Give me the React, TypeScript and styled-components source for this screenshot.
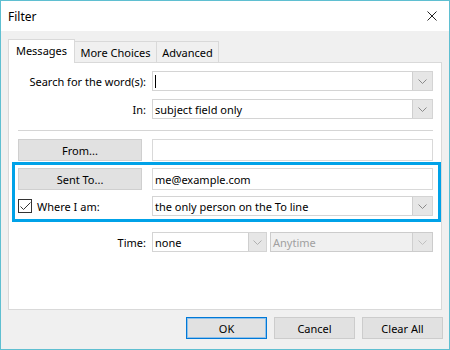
import React from "react";
import styled, { createGlobalStyle } from "styled-components";

const GlobalStyle = createGlobalStyle`
  html, body { margin: 0; padding: 0; background: #ffffff; }
  body {
    font-family: "Noto Sans", "Segoe UI", sans-serif;
    font-size: 11px;
    color: #000000;
  }
  * { box-sizing: border-box; }
`;

const Window = styled.div`
  width: 450px;
  height: 350px;
  border: 1px solid #5fbfd1;
  display: flex;
  flex-direction: column;
  background: #f0f0f0;
`;

const TitleBar = styled.div`
  height: 30px;
  flex: none;
  background: #ffffff;
  display: flex;
  align-items: center;
  justify-content: space-between;
  padding: 0 12px 0 7px;
`;

const Title = styled.span`
  font-size: 12px;
`;

const CloseButton = styled.div`
  width: 10px;
  height: 10px;
  display: flex;
`;

const Body = styled.div`
  flex: none;
  padding: 8px 7px 0 7px;
  display: flex;
  flex-direction: column;
`;

const TabStrip = styled.div`
  position: relative;
  z-index: 1;
  height: 23px;
  display: flex;
  align-items: flex-start;
`;

const Tab = styled.div<{ $active?: boolean; $w: number }>`
  width: ${(p) => p.$w}px;
  height: ${(p) => (p.$active ? 24 : 21)}px;
  margin-top: ${(p) => (p.$active ? 0 : 2)}px;
  margin-left: ${(p) => (p.$active ? 0 : -1)}px;
  border: 1px solid #d9d9d9;
  border-bottom: none;
  background: ${(p) => (p.$active ? "#ffffff" : "#f0f0f0")};
  display: flex;
  align-items: center;
  justify-content: center;
  padding-bottom: ${(p) => (p.$active ? 2 : 0)}px;
  white-space: nowrap;
`;

const Panel = styled.div`
  height: 248px;
  border: 1px solid #d9d9d9;
  background: #ffffff;
  padding: 8px 8px 0 9px;
  display: flex;
  flex-direction: column;
`;

const Row = styled.div<{ $h: number; $mt?: number }>`
  display: grid;
  grid-template-columns: 128px 1fr;
  column-gap: 6px;
  align-items: center;
  height: ${(p) => p.$h}px;
  margin-top: ${(p) => p.$mt ?? 0}px;
`;

const Label = styled.div`
  text-align: right;
  white-space: nowrap;
`;

const Separator = styled.div`
  height: 1px;
  background: #d5d5d5;
  margin: 11px 0 8px 0;
`;

const Combo = styled.div<{ $disabled?: boolean }>`
  height: 20px;
  display: flex;
  border: 1px solid ${(p) => (p.$disabled ? "#cccccc" : "#d4d4d4")};
  background: ${(p) => (p.$disabled ? "#f0f0f0" : "#ffffff")};
  color: ${(p) => (p.$disabled ? "#a0a0a0" : "#000000")};
`;

const ComboValue = styled.div`
  flex: 1;
  min-width: 0;
  padding: 0 2px;
  display: flex;
  align-items: center;
  white-space: nowrap;
  overflow: hidden;
`;

const Caret = styled.span`
  width: 1px;
  height: 13px;
  background: #000000;
`;

const ComboArrow = styled.div<{ $w?: number }>`
  width: ${(p) => p.$w ?? 20}px;
  flex: none;
  background: #e6e6e6;
  border-left: 1px solid #cfcfcf;
  display: flex;
  align-items: center;
  justify-content: center;
`;

const TextInput = styled.div`
  height: 22px;
  border: 1px solid #d9d9d9;
  background: #ffffff;
  padding: 0 2px;
  display: flex;
  align-items: center;
`;

const FieldButton = styled.div`
  width: 124px;
  height: 22px;
  background: #e1e1e1;
  border: 1px solid #cfcfcf;
  display: flex;
  align-items: center;
  justify-content: center;
`;

const Highlight = styled.div`
  margin: 1px -8px 0 -6px;
  border: 3px solid #00a2e8;
  padding: 3px 5px 3px 3px;
  display: flex;
  flex-direction: column;
  gap: 6px;
`;

const CheckLabel = styled.div`
  display: flex;
  align-items: center;
  gap: 5px;
  white-space: nowrap;
`;

const CheckBox = styled.div`
  width: 14px;
  height: 14px;
  border: 1px solid #333333;
  background: #ffffff;
  display: flex;
  align-items: center;
  justify-content: center;
`;

const TimeCombos = styled.div`
  display: flex;
  gap: 3px;
`;

const Footer = styled.div`
  display: flex;
  justify-content: flex-end;
  gap: 7px;
  padding: 7px 6px 0 0;
`;

const DialogButton = styled.div<{ $default?: boolean }>`
  width: 81px;
  height: 22px;
  background: #e1e1e1;
  border: 1px solid ${(p) => (p.$default ? "#0078d7" : "#cccccc")};
  box-shadow: ${(p) => (p.$default ? "inset 0 0 0 1px #8fc1ea" : "none")};
  display: flex;
  align-items: center;
  justify-content: center;
`;

const Chevron = ({ color = "#8a8a8a" }: { color?: string }) => (
  <svg width="9" height="5" viewBox="0 0 9 5">
    <polyline points="0.5,0.5 4.5,4.5 8.5,0.5" fill="none" stroke={color} strokeWidth="1" />
  </svg>
);

export default function App() {
  return (
    <>
      <GlobalStyle />
      <Window>
        <TitleBar>
          <Title>Filter</Title>
          <CloseButton>
            <svg width="10" height="10" viewBox="0 0 10 10">
              <path d="M0.5 0.5 L9.5 9.5 M9.5 0.5 L0.5 9.5" stroke="#222" strokeWidth="1" />
            </svg>
          </CloseButton>
        </TitleBar>
        <Body>
          <TabStrip>
            <Tab $active $w={67}>Messages</Tab>
            <Tab $w={83}>More Choices</Tab>
            <Tab $w={63}>Advanced</Tab>
          </TabStrip>
          <Panel>
            <Row $h={20}>
              <Label>Search for the word(s):</Label>
              <Combo>
                <ComboValue>
                  <Caret />
                </ComboValue>
                <ComboArrow>
                  <Chevron />
                </ComboArrow>
              </Combo>
            </Row>
            <Row $h={20} $mt={8}>
              <Label>In:</Label>
              <Combo>
                <ComboValue>subject field only</ComboValue>
                <ComboArrow>
                  <Chevron />
                </ComboArrow>
              </Combo>
            </Row>
            <Separator />
            <Row $h={22}>
              <FieldButton>From...</FieldButton>
              <TextInput />
            </Row>
            <Highlight>
              <Row $h={22}>
                <FieldButton>Sent To...</FieldButton>
                <TextInput>me@example.com</TextInput>
              </Row>
              <Row $h={20}>
                <CheckLabel>
                  <CheckBox>
                    <svg width="11" height="9" viewBox="0 0 11 9">
                      <polyline points="0.5,4.5 3.5,7.5 10.5,0.5" fill="none" stroke="#333" strokeWidth="1" />
                    </svg>
                  </CheckBox>
                  Where I am:
                </CheckLabel>
                <Combo>
                  <ComboValue>the only person on the To line</ComboValue>
                  <ComboArrow>
                    <Chevron />
                  </ComboArrow>
                </Combo>
              </Row>
            </Highlight>
            <Row $h={20} $mt={10}>
              <Label>Time:</Label>
              <TimeCombos>
                <Combo style={{ width: 115 }}>
                  <ComboValue>none</ComboValue>
                  <ComboArrow $w={18}>
                    <Chevron color="#b0b0b0" />
                  </ComboArrow>
                </Combo>
                <Combo $disabled style={{ flex: 1 }}>
                  <ComboValue>Anytime</ComboValue>
                  <ComboArrow>
                    <Chevron color="#c0c0c0" />
                  </ComboArrow>
                </Combo>
              </TimeCombos>
            </Row>
          </Panel>
        </Body>
        <Footer>
          <DialogButton $default>OK</DialogButton>
          <DialogButton>Cancel</DialogButton>
          <DialogButton>Clear All</DialogButton>
        </Footer>
      </Window>
    </>
  );
}
